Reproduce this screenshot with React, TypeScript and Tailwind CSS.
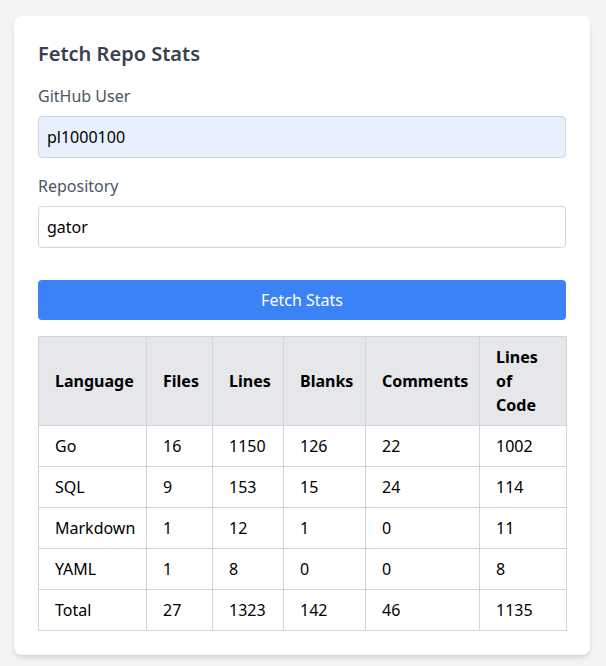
import React from "react";

const rows = [
  ["Go", "16", "1150", "126", "22", "1002"],
  ["SQL", "9", "153", "15", "24", "114"],
  ["Markdown", "1", "12", "1", "0", "11"],
  ["YAML", "1", "8", "0", "0", "8"],
  ["Total", "27", "1323", "142", "46", "1135"],
];

export default function App() {
  return (
    <div
      className="min-h-[666px] bg-[#f3f4f6] pl-[14px] pt-4 pb-3"
      style={{ fontFamily: '"Noto Sans", "Open Sans", sans-serif' }}
    >
      <div className="w-[576px] bg-white rounded-lg shadow-md p-6">
        <h2 className="text-xl font-semibold text-[#374151] mb-4 leading-7">Fetch Repo Stats</h2>
        <div className="mb-4">
          <label className="block text-[#4b5563] mb-2 text-base leading-6">GitHub User</label>
          <input
            readOnly
            value="pl1000100"
            className="w-full px-2 py-2 border border-[#d1d5db] rounded bg-[#e8f0fe] text-black text-base leading-6 outline-none"
          />
        </div>
        <div className="mb-4">
          <label className="block text-[#4b5563] mb-2 text-base leading-6">Repository</label>
          <input
            readOnly
            value="gator"
            className="w-full px-2 py-2 border border-[#d1d5db] rounded bg-white text-black text-base leading-6 outline-none"
          />
        </div>
        <button className="mt-4 w-full bg-[#3b82f6] text-white py-2 rounded text-base leading-6">
          Fetch Stats
        </button>
        <table className="mt-4 w-full table-fixed border-collapse border border-[#d1d5db] text-base leading-6 text-black">
          <colgroup>
            <col className="w-[108px]" />
            <col className="w-[66px]" />
            <col className="w-[71px]" />
            <col className="w-[82px]" />
            <col className="w-[114px]" />
            <col className="w-[87px]" />
          </colgroup>
          <thead>
            <tr className="bg-[#e5e7eb]">
              {["Language", "Files", "Lines", "Blanks", "Comments", "Lines of Code"].map((h) => (
                <th key={h} className="border border-[#d1d5db] px-4 py-2 text-left font-bold">
                  {h === "Lines of Code" ? (
                    <>
                      Lines
                      <br />
                      of
                      <br />
                      Code
                    </>
                  ) : (
                    h
                  )}
                </th>
              ))}
            </tr>
          </thead>
          <tbody>
            {rows.map((r) => (
              <tr key={r[0]}>
                {r.map((c, i) => (
                  <td key={i} className="border border-[#d1d5db] px-4 py-2">
                    {c}
                  </td>
                ))}
              </tr>
            ))}
          </tbody>
        </table>
      </div>
    </div>
  );
}
